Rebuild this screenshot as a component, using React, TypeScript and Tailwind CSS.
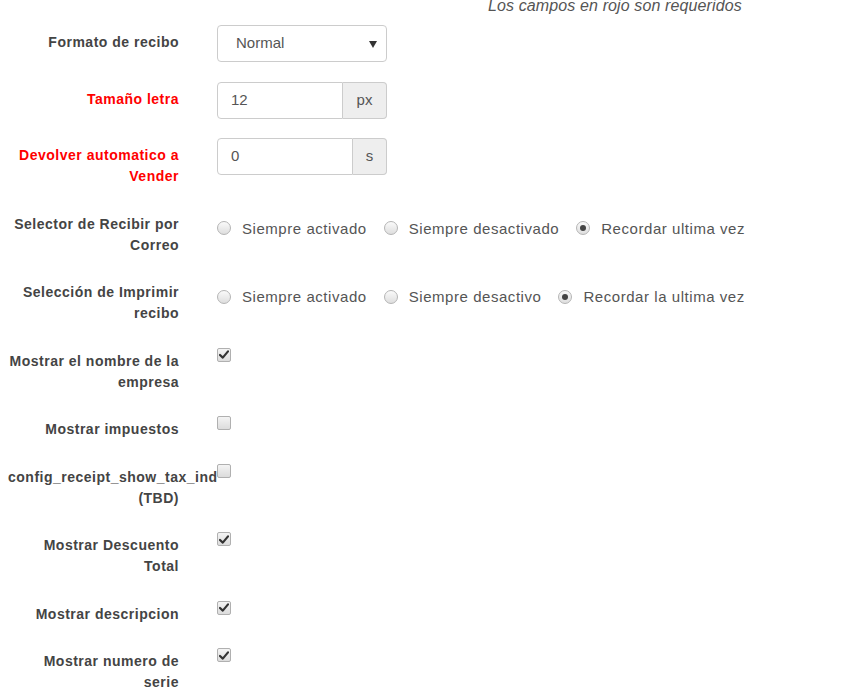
import React from "react";

const font = { fontFamily: '"Liberation Sans", Arial, sans-serif' };

function Radio({ checked }: { checked?: boolean }) {
  return (
    <span className="relative inline-flex h-[14px] w-[14px] shrink-0 items-center justify-center rounded-full border border-[#b5b5b5] bg-gradient-to-b from-[#fafafa] to-[#dedede]">
      {checked && <span className="h-[6px] w-[6px] rounded-full bg-[#444]" />}
    </span>
  );
}

function Check({ checked }: { checked?: boolean }) {
  return (
    <span className="flex h-[14px] w-[14px] items-center justify-center rounded-[2px] border border-[#b0b0b0] bg-gradient-to-b from-[#f4f4f4] to-[#dcdcdc]">
      {checked && (
        <svg width="10" height="9" viewBox="0 0 10 9">
          <path d="M1 5 L3.8 7.6 L9 1.4" fill="none" stroke="#333" strokeWidth="2.2" strokeLinecap="round" strokeLinejoin="round" />
        </svg>
      )}
    </span>
  );
}

function Label({ children, red }: { children: React.ReactNode; red?: boolean }) {
  return (
    <div
      className={`w-[179px] shrink-0 whitespace-nowrap pl-[8px] pt-[7px] text-right text-[14px] font-bold leading-[21px] tracking-[0.5px] ${
        red ? "text-[#ff0000]" : "text-[#444]"
      }`}
    >
      {children}
    </div>
  );
}

function Row({ label, red, children }: { label: React.ReactNode; red?: boolean; children: React.ReactNode }) {
  return (
    <div className="mb-[19.5px] flex">
      <Label red={red}>{label}</Label>
      <div className="ml-[38px]">{children}</div>
    </div>
  );
}

function RadioGroup({ items, selected }: { items: string[]; selected: number }) {
  return (
    <div className="flex items-center gap-[17px] pt-[11px] text-[15px] leading-[21px] tracking-[0.55px] text-[#555]">
      {items.map((t, i) => (
        <div key={t} className="flex items-center gap-[11px]">
          <Radio checked={i === selected} />
          <span>{t}</span>
        </div>
      ))}
    </div>
  );
}

function CheckCell({ checked }: { checked?: boolean }) {
  return (
    <div className="flex pt-[4px]">
      <Check checked={checked} />
    </div>
  );
}

export default function App() {
  return (
    <div style={font} className="min-h-[696px] w-[863px] overflow-hidden bg-white">
      <div className="mt-[-5px] mb-[9px] h-[21px] pl-[488px] text-[16px] italic leading-[21px] tracking-[0.12px] text-[#555]">
        Los campos en rojo son requeridos
      </div>

      <Row label="Formato de recibo">
        <div className="relative flex h-[37px] w-[170px] items-center rounded-[4px] border border-[#ccc] bg-white pl-[18px] text-[15px] text-[#555]">
          Normal
          <svg className="absolute right-[9px] top-[15px]" width="8" height="7" viewBox="0 0 8 7">
            <path d="M0 0 H8 L4 7 Z" fill="#333" />
          </svg>
        </div>
      </Row>

      <Row label="Tamaño letra" red>
        <div className="flex h-[37px] w-[170px] text-[15px] text-[#555]">
          <div className="flex flex-1 items-center rounded-l-[4px] border border-[#ccc] pl-[13px]">12</div>
          <div className="flex w-[44px] items-center justify-center rounded-r-[4px] border border-l-0 border-[#ccc] bg-[#eee]">
            px
          </div>
        </div>
      </Row>

      <Row
        label={
          <>
            Devolver automatico a<br />
            Vender
          </>
        }
        red
      >
        <div className="flex h-[37px] w-[170px] text-[15px] text-[#555]">
          <div className="flex flex-1 items-center rounded-l-[4px] border border-[#ccc] pl-[13px]">0</div>
          <div className="flex w-[34px] items-center justify-center rounded-r-[4px] border border-l-0 border-[#ccc] bg-[#eee]">
            s
          </div>
        </div>
      </Row>

      <Row
        label={
          <>
            Selector de Recibir por<br />
            Correo
          </>
        }
      >
        <RadioGroup items={["Siempre activado", "Siempre desactivado", "Recordar ultima vez"]} selected={2} />
      </Row>

      <Row
        label={
          <>
            Selección de Imprimir<br />
            recibo
          </>
        }
      >
        <RadioGroup items={["Siempre activado", "Siempre desactivo", "Recordar la ultima vez"]} selected={2} />
      </Row>

      <Row
        label={
          <>
            Mostrar el nombre de la<br />
            empresa
          </>
        }
      >
        <CheckCell checked />
      </Row>

      <Row label="Mostrar impuestos">
        <CheckCell />
      </Row>

      <Row
        label={
          <>
            config_receipt_show_tax_ind<br />
            (TBD)
          </>
        }
      >
        <CheckCell />
      </Row>

      <Row
        label={
          <>
            Mostrar Descuento<br />
            Total
          </>
        }
      >
        <CheckCell checked />
      </Row>

      <Row label="Mostrar descripcion">
        <CheckCell checked />
      </Row>

      <Row
        label={
          <>
            Mostrar numero de<br />
            serie
          </>
        }
      >
        <CheckCell checked />
      </Row>
    </div>
  );
}
